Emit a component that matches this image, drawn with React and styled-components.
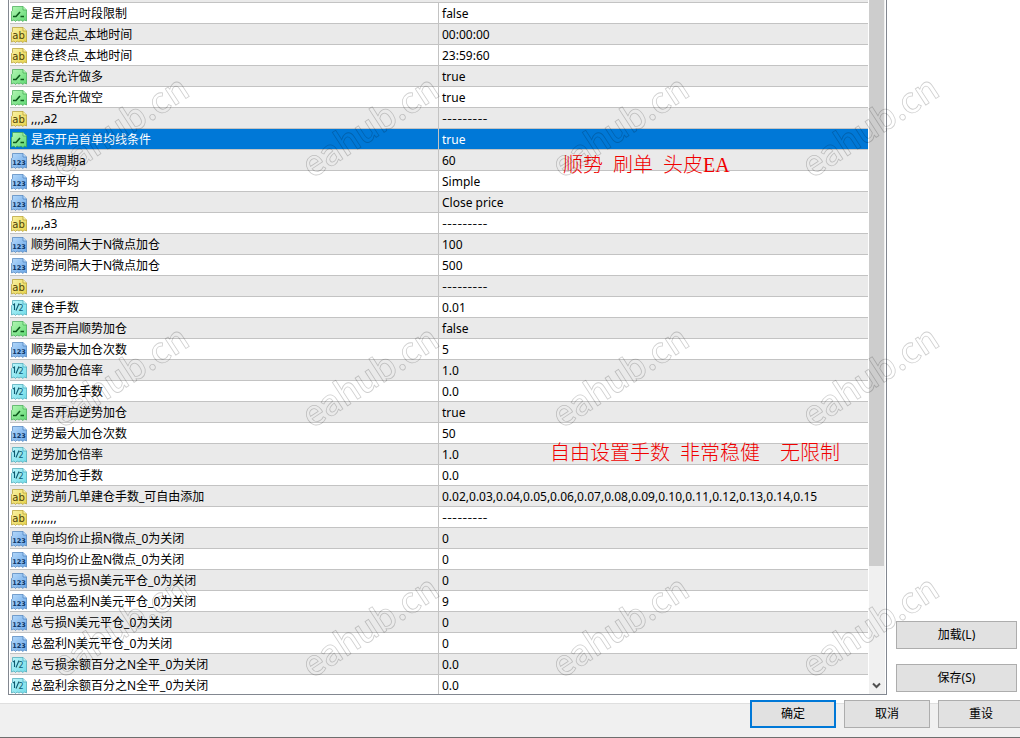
import React, { useState } from 'react'
import styled, { createGlobalStyle } from 'styled-components'

const GlobalStyle = createGlobalStyle`
  * {
    box-sizing: border-box;
  }
  body {
    margin: 0;
    background: #fff;
    color: #000;
    font: 12px/16px 'Noto Sans', 'Noto Sans CJK SC', sans-serif;
  }
`

const Dialog = styled.main`
  position: relative;
  overflow: hidden;
`

const Body = styled.div`
  display: flex;
  gap: 9px;
  padding: 0 3px 8px 8px;
`

const ListBox = styled.div`
  flex: 1;
  display: flex;
  gap: 1px;
  padding: 0 1px;
  border: 1px solid #828790;
  border-top: 0;
`

const ListView = styled.div`
  flex: 1;
  padding-top: 2px;
  background: #eaeaea;
`

const Params = styled.table`
  width: 100%;
  table-layout: fixed;
  border-spacing: 0;
  border-top: 1px solid #c3c3c3;
`

const Name = styled.th`
  width: 50%;
  padding: 3px 1px 1px;
  font-weight: normal;
  text-align: left;
  border-right: 1px solid #c3c3c3;
  border-bottom: 1px solid #c3c3c3;
`

const Value = styled.td`
  padding: 3px 3px 1px;
  border-bottom: 1px solid #c3c3c3;
  font: ${(p) => (p.$dashes ? "11px/16px 'Inter', sans-serif" : 'inherit')};
  white-space: nowrap;
`

const Row = styled.tr`
  background: ${(p) => (p.$selected ? '#0078d7' : p.$striped ? '#eaeaea' : '#fff')};
  color: ${(p) => (p.$selected ? '#fff' : '#000')};
  cursor: default;

  &:last-child ${Name}, &:last-child ${Value} {
    padding-bottom: 0;
    border-bottom: 0;
  }
`

const Label = styled.div`
  display: flex;
  gap: 4px;
  height: 16px;
  white-space: nowrap;
`

const Icon = styled.svg`
  flex: none;
  width: 16px;
  height: 16px;
`

const ScrollBar = styled.div`
  flex: none;
  display: flex;
  flex-direction: column;
  justify-content: space-between;
  width: 16px;
  background: #f0f0f0;
`

const Thumb = styled.div`
  width: 15px;
  height: 81.5%;
  background: #cdcdcd;
`

const ScrollButton = styled.button`
  display: flex;
  align-items: center;
  justify-content: center;
  width: 15px;
  height: 18px;
  padding: 0;
  border: 0;
  background: none;
`

const Side = styled.div`
  flex: none;
  display: flex;
  flex-direction: column;
  justify-content: flex-end;
  gap: 15px;
  width: 121px;
  padding-bottom: 3px;
`

const Button = styled.button`
  height: 28px;
  padding: 0;
  font: inherit;
  color: #000;
  background: #e1e1e1;
  border: ${(p) => (p.$primary ? '2px solid #0078d7' : '1px solid #adadad')};
`

const Footer = styled.footer`
  height: 35px;
  background: #f0f0f0;
  border-top: 1px solid #dfdfdf;
  border-bottom: 1px solid #6e6e6e;
`

const Actions = styled.div`
  display: flex;
  justify-content: flex-end;
  gap: 8px;
  margin: -4px -4px 0 0;

  ${Button} {
    width: 86px;
  }
`

const Note = styled.p`
  position: absolute;
  top: ${(p) => p.$top}px;
  left: ${(p) => p.$left}px;
  margin: 0;
  font: 300 20px/24px 'Liberation Serif', 'Noto Sans CJK SC', serif;
  color: #f00000;
  white-space: pre;
`

const Watermark = styled.svg`
  position: absolute;
  inset: 0;
  width: 100%;
  height: 100%;
  pointer-events: none;

  text {
    font: 500 35px 'Noto Sans CJK SC', sans-serif;
    fill: none;
    stroke: #000;
    stroke-opacity: 0.2;
    stroke-width: 0.8px;
  }
`

const colors = {
  bool: { light: '#b4f7b4', dark: '#5fd873', line: '#3fa650', ink: '#0d5a1c' },
  string: { light: '#fbf3a6', dark: '#e6d24a', line: '#b39b2c', ink: '#4d4208' },
  int: { light: '#b5d9fb', dark: '#6aa6e6', line: '#4a7fba', ink: '#0c3566' },
  double: { light: '#bdf6fb', dark: '#6fdbe8', line: '#43a3b5', ink: '#0d5a70' },
}

const TypeDefs = () => (
  <svg width="0" height="0" style={{ display: 'block' }} aria-hidden="true">
    <defs>
      {Object.entries(colors).map(([type, c]) => (
        <linearGradient key={type} id={`fill-${type}`} x1="0" y1="0" x2="1" y2="1">
          <stop offset="0" stopColor={c.light} />
          <stop offset="1" stopColor={c.dark} />
        </linearGradient>
      ))}
    </defs>
  </svg>
)

const TypeIcon = ({ type }) => {
  const c = colors[type]
  return (
    <Icon viewBox="0 0 16 16" aria-hidden="true">
      <path
        d="M1.5 .5H12L15.5 4V15L13.5 14L12 15.5L10 14L8 15L6 14L4.5 15.5L3 14L.5 15V5.5L1.5 4.5Z"
        fill={`url(#fill-${type})`}
        stroke={c.line}
        strokeWidth=".7"
      />
      <path d="M12 .5V4H15.5" fill={c.light} stroke={c.line} strokeWidth=".7" />
      {type === 'bool' && (
        <path d="M2 10.5H5L9 6M9.5 10.5H13" fill="none" stroke={c.ink} strokeWidth="1.6" />
      )}
      {type === 'string' && (
        <text x="7.5" y="11.5" textAnchor="middle" fontFamily="DejaVu Sans" fontSize="10" fill={c.ink}>ab</text>
      )}
      {type === 'int' && (
        <text x="8" y="11.5" textAnchor="middle" fontFamily="DejaVu Sans" fontWeight="bold" fontSize="6.5" fill={c.ink}>123</text>
      )}
      {type === 'double' && (
        <>
          <path d="M2 5L3.5 4V10M5 10.5L8 3.5" fill="none" stroke={c.ink} strokeWidth="1.1" />
          <text x="7.5" y="10.5" fontFamily="DejaVu Sans" fontSize="8" fill={c.ink}>2</text>
        </>
      )}
    </Icon>
  )
}

const params = [
  ['bool', '是否开启时段限制', 'false'],
  ['string', '建仓起点_本地时间', '00:00:00'],
  ['string', '建仓终点_本地时间', '23:59:60'],
  ['bool', '是否允许做多', 'true'],
  ['bool', '是否允许做空', 'true'],
  ['string', ',,,,a2', '---------'],
  ['bool', '是否开启首单均线条件', 'true'],
  ['int', '均线周期a', '60'],
  ['int', '移动平均', 'Simple'],
  ['int', '价格应用', 'Close price'],
  ['string', ',,,,a3', '---------'],
  ['int', '顺势间隔大于N微点加仓', '100'],
  ['int', '逆势间隔大于N微点加仓', '500'],
  ['string', ',,,,', '---------'],
  ['double', '建仓手数', '0.01'],
  ['bool', '是否开启顺势加仓', 'false'],
  ['int', '顺势最大加仓次数', '5'],
  ['double', '顺势加仓倍率', '1.0'],
  ['double', '顺势加仓手数', '0.0'],
  ['bool', '是否开启逆势加仓', 'true'],
  ['int', '逆势最大加仓次数', '50'],
  ['double', '逆势加仓倍率', '1.0'],
  ['double', '逆势加仓手数', '0.0'],
  ['string', '逆势前几单建仓手数_可自由添加', '0.02,0.03,0.04,0.05,0.06,0.07,0.08,0.09,0.10,0.11,0.12,0.13,0.14,0.15'],
  ['string', ',,,,,,,,', '---------'],
  ['int', '单向均价止损N微点_0为关闭', '0'],
  ['int', '单向均价止盈N微点_0为关闭', '0'],
  ['int', '单向总亏损N美元平仓_0为关闭', '0'],
  ['int', '单向总盈利N美元平仓_0为关闭', '9'],
  ['int', '总亏损N美元平仓_0为关闭', '0'],
  ['int', '总盈利N美元平仓_0为关闭', '0'],
  ['double', '总亏损余额百分之N全平_0为关闭', '0.0'],
  ['double', '总盈利余额百分之N全平_0为关闭', '0.0'],
]

export default function App() {
  const [selected, setSelected] = useState(6)

  return (
    <Dialog>
      <GlobalStyle />
      <TypeDefs />
      <Body>
        <ListBox>
          <ListView>
            <Params>
              <tbody>
                {params.map(([type, name, value], i) => (
                  <Row key={i} $striped={i % 2 === 1} $selected={i === selected} onClick={() => setSelected(i)}>
                    <Name scope="row">
                      <Label><TypeIcon type={type} />{name}</Label>
                    </Name>
                    <Value $dashes={value.startsWith('--')}>{value}</Value>
                  </Row>
                ))}
              </tbody>
            </Params>
          </ListView>
          <ScrollBar>
            <Thumb />
            <ScrollButton aria-label="向下滚动">
              <svg width="9" height="7" viewBox="0 0 9 7">
                <path d="M1 1.5L4.5 5L8 1.5" fill="none" stroke="#505050" strokeWidth="2" />
              </svg>
            </ScrollButton>
          </ScrollBar>
        </ListBox>
        <Side>
          <Button>加载(L)</Button>
          <Button>保存(S)</Button>
        </Side>
      </Body>
      <Footer>
        <Actions>
          <Button $primary>确定</Button>
          <Button>取消</Button>
          <Button>重设</Button>
        </Actions>
      </Footer>
      <Note $top={153} $left={563}>顺势  刷单  头皮EA</Note>
      <Note $top={441} $left={550}>自由设置手数  非常稳健    无限制</Note>
      <Watermark aria-hidden="true">
        <defs>
          <pattern id="mark" x="50" width="250" height="250" patternUnits="userSpaceOnUse">
            <text transform="translate(12 179) rotate(-33)">eahub.cn</text>
          </pattern>
        </defs>
        <rect x="50" width="100%" height="100%" fill="url(#mark)" />
      </Watermark>
    </Dialog>
  )
}
